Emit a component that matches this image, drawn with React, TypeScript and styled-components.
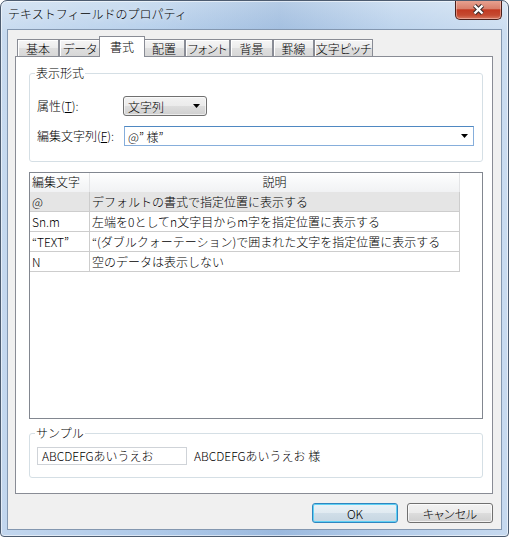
import styled, { createGlobalStyle } from 'styled-components'

const GlobalStyle = createGlobalStyle`
  html, body {
    margin: 0;
    padding: 0;
    background: #ffffff;
  }
  body {
    font-family: "Noto Sans CJK JP", "Noto Sans", sans-serif;
    font-size: 12px;
    font-weight: 300;
    color: #000;
  }
  * {
    box-sizing: border-box;
  }
`

const tabs = [
  { label: '基本', width: 42 },
  { label: 'データ', width: 42 },
  { label: '書式', width: 42 },
  { label: '配置', width: 42 },
  { label: 'フォント', width: 45 },
  { label: '背景', width: 43 },
  { label: '罫線', width: 41 },
  { label: '文字ピッチ', width: 59 },
]

const rows = [
  { code: '@', desc: 'デフォルトの書式で指定位置に表示する' },
  { code: 'Sn.m', desc: '左端を0としてn文字目からm字を指定位置に表示する' },
  { code: '“TEXT”', desc: '“(ダブルクォーテーション)で囲まれた文字を指定位置に表示する' },
  { code: 'N', desc: '空のデータは表示しない' },
]

const DownArrow = () => (
  <svg width="7" height="4" viewBox="0 0 7 4">
    <path d="M0 0h7L3.5 4z" fill="#000" />
  </svg>
)

const App = () => {
  return (
    <>
      <GlobalStyle />
      <Window>
        <TitleBar>
          <TitleText>テキストフィールドのプロパティ</TitleText>
          <CloseButton>
            <svg width="13" height="11" viewBox="0 0 13 11">
              <path d="M2.5 1.5L10.5 9.5M10.5 1.5L2.5 9.5" stroke="#3a2b2b" strokeWidth="4.4" />
              <path d="M2.5 1.5L10.5 9.5M10.5 1.5L2.5 9.5" stroke="#ffffff" strokeWidth="2.4" />
            </svg>
          </CloseButton>
        </TitleBar>
        <Client>
          <TabStrip>
            {tabs.map((t, i) => (
              <Tab key={t.label} $active={i === 2} $w={t.width}>
                {t.label}
              </Tab>
            ))}
          </TabStrip>
          <Panel>
            <GroupBox>
              <Legend>表示形式</Legend>
              <FormGrid>
                <FieldLabel>
                  属性(<u>T</u>):
                </FieldLabel>
                <DropButton>
                  <span>文字列</span>
                  <DownArrow />
                </DropButton>
                <FieldLabel>
                  編集文字列(<u>F</u>):
                </FieldLabel>
                <EditCombo>
                  <span>@” 様”</span>
                  <DownArrow />
                </EditCombo>
              </FormGrid>
            </GroupBox>

            <ListView>
              <HeaderRow>
                <HeaderCell $w={60}>編集文字</HeaderCell>
                <HeaderCell $w={370} $center>
                  説明
                </HeaderCell>
              </HeaderRow>
              {rows.map((r, i) => (
                <Row key={r.code} $selected={i === 0}>
                  <Cell $w={60}>{r.code}</Cell>
                  <Cell $w={370}>{r.desc}</Cell>
                </Row>
              ))}
            </ListView>

            <SampleBox>
              <Legend>サンプル</Legend>
              <SampleRow>
                <SampleInput>ABCDEFGあいうえお</SampleInput>
                <SampleText>ABCDEFGあいうえお 様</SampleText>
              </SampleRow>
            </SampleBox>
          </Panel>
          <ButtonRow>
            <DialogButton $primary>OK</DialogButton>
            <DialogButton>キャンセル</DialogButton>
          </ButtonRow>
        </Client>
      </Window>
    </>
  )
}

export default App

const Window = styled.div`
  width: 509px;
  height: 537px;
  border: 1px solid #4d5c70;
  border-radius: 7px 7px 4px 4px;
  overflow: hidden;
  display: flex;
  flex-direction: column;
  background:
    linear-gradient(90deg, rgba(255, 255, 255, 0.3) 0%, rgba(255, 255, 255, 0.08) 30%, rgba(60, 100, 160, 0.12) 55%, rgba(255, 255, 255, 0.15) 78%, rgba(255, 255, 255, 0.35) 100%),
    linear-gradient(180deg, #c6daef 0%, #b0cbe9 6%, #a8c5e7 100%);
  box-shadow: inset 0 0 0 1px rgba(255, 255, 255, 0.55);
`

const TitleBar = styled.div`
  height: 28px;
  display: flex;
  align-items: flex-start;
  justify-content: space-between;
  flex-shrink: 0;
`

const TitleText = styled.div`
  padding-left: 7px;
  line-height: 26px;
  font-size: 12px;
  color: #000;
  text-shadow: 0 0 6px rgba(255, 255, 255, 0.9);
`

const CloseButton = styled.div`
  width: 47px;
  height: 20px;
  margin: -1px 6px 0 0;
  border: 1px solid #4b1f1a;
  border-top: none;
  border-radius: 0 0 5px 5px;
  display: flex;
  align-items: center;
  justify-content: center;
  background: linear-gradient(180deg, #e9a594 0%, #d9806c 45%, #c23a22 52%, #c54a31 80%, #d87a62 100%);
  box-shadow: inset 0 0 0 1px rgba(255, 220, 210, 0.45);
`

const Client = styled.div`
  flex: 1;
  margin: 0 6px 6px;
  border: 1px solid #8397b0;
  background: #f0f0f0;
  padding: 6px 8px 6px 7px;
  display: flex;
  flex-direction: column;
`

const TabStrip = styled.div`
  height: 21px;
  display: flex;
  align-items: flex-end;
  padding-left: 2px;
  margin-bottom: -1px;
  position: relative;
  z-index: 1;
`

const Tab = styled.div<{ $active?: boolean; $w: number }>`
  width: ${p => (p.$active ? p.$w + 4 : p.$w)}px;
  height: ${p => (p.$active ? 21 : 17)}px;
  margin: ${p => (p.$active ? '0 -2px' : '0 0 1px')};
  padding-bottom: ${p => (p.$active ? 2 : 0)}px;
  border: 1px solid #898c95;
  border-bottom: none;
  position: relative;
  z-index: ${p => (p.$active ? 2 : 1)};
  display: flex;
  align-items: center;
  justify-content: center;
  white-space: nowrap;
  font-feature-settings: "palt";
  background: ${p =>
    p.$active ? '#ffffff' : 'linear-gradient(180deg, #f6f6f6 0%, #ececec 50%, #dfdfdf 51%, #d7d7d7 100%)'};
  box-shadow: ${p => (p.$active ? 'none' : 'inset 1px 1px 0 #ffffff')};
`

const Panel = styled.div`
  height: 438px;
  border: 1px solid #898c95;
  background: #ffffff;
  padding: 10px 9px 15px 13px;
  display: flex;
  flex-direction: column;
`

const GroupBox = styled.fieldset`
  margin: 0;
  min-width: 0;
  padding: 17px 8px 15px 7px;
  border: 1px solid #d5dfe5;
  border-radius: 3px;
`

const Legend = styled.legend`
  padding: 0 1px;
  margin-left: -2px;
  line-height: 12px;
  font-size: 12px;
  color: #000;
`

const FormGrid = styled.div`
  display: grid;
  grid-template-columns: 86px 1fr;
  row-gap: 10px;
  align-items: center;
`

const FieldLabel = styled.div`
  line-height: 20px;
  white-space: nowrap;
`

const DropButton = styled.div`
  width: 84px;
  height: 20px;
  border: 1px solid #707070;
  border-radius: 3px;
  padding: 0 6px 0 4px;
  display: flex;
  align-items: center;
  justify-content: space-between;
  background: linear-gradient(180deg, #f2f2f2 0%, #ebebeb 50%, #dddddd 51%, #cfcfcf 100%);
  box-shadow: inset 0 0 0 1px rgba(255, 255, 255, 0.6);
`

const EditCombo = styled.div`
  height: 20px;
  margin-left: 1px;
  border: 1px solid #86aedb;
  border-top-color: #4f88c2;
  background: #ffffff;
  padding: 0 5px 0 3px;
  display: flex;
  align-items: center;
  justify-content: space-between;
`

const ListView = styled.div`
  margin-top: 10px;
  height: 247px;
  border: 1px solid #828790;
  background: #ffffff;
`

const HeaderRow = styled.div`
  display: flex;
  height: 19px;
`

const HeaderCell = styled.div<{ $w: number; $center?: boolean }>`
  width: ${p => p.$w}px;
  border-right: 1px solid #e3e4e6;
  padding-left: ${p => (p.$center ? 0 : 2)}px;
  text-align: ${p => (p.$center ? 'center' : 'left')};
  line-height: 18px;
  background: linear-gradient(180deg, #ffffff 0%, #f7f8f9 50%, #f1f2f4 100%);
  white-space: nowrap;
`

const Row = styled.div<{ $selected?: boolean }>`
  display: flex;
  width: 430px;
  height: 20px;
  border-bottom: 1px solid #cdcdcd;
  background: ${p => (p.$selected ? '#e5e5e5' : 'transparent')};
`

const Cell = styled.div<{ $w: number }>`
  width: ${p => p.$w}px;
  border-right: 1px solid #cdcdcd;
  padding-left: 2px;
  line-height: 19px;
  white-space: nowrap;
  overflow: hidden;
`

const SampleBox = styled(GroupBox)`
  margin-top: 8px;
  padding: 8px 8px 12px 7px;
`

const SampleRow = styled.div`
  display: flex;
  align-items: center;
  gap: 7px;
`

const SampleInput = styled.div`
  width: 150px;
  height: 18px;
  border: 1px solid #cfd3d8;
  padding-left: 4px;
  line-height: 16px;
  white-space: nowrap;
`

const SampleText = styled.div`
  line-height: 16px;
  white-space: nowrap;
`

const ButtonRow = styled.div`
  display: flex;
  justify-content: flex-end;
  gap: 9px;
  margin-top: 9px;
`

const DialogButton = styled.div<{ $primary?: boolean }>`
  width: 86px;
  height: 20px;
  border-radius: 3px;
  display: flex;
  align-items: center;
  justify-content: center;
  font-feature-settings: "palt";
  border: 1px solid ${p => (p.$primary ? '#2f86c0' : '#707070')};
  background: ${p =>
    p.$primary
      ? 'linear-gradient(180deg, #eaf2f7 0%, #e0eaf1 50%, #d0dee8 51%, #c6d6e2 100%)'
      : 'linear-gradient(180deg, #f2f2f2 0%, #ebebeb 50%, #dddddd 51%, #cfcfcf 100%)'};
  box-shadow: ${p =>
    p.$primary ? 'inset 0 0 0 1px #5fd0f4' : 'inset 0 0 0 1px rgba(255, 255, 255, 0.7)'};
`
